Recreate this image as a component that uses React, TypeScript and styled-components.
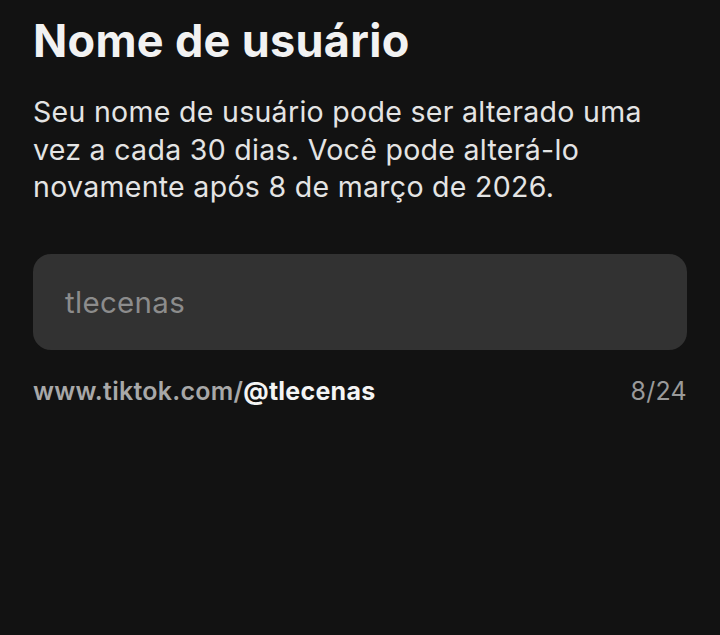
import React from 'react';
import styled, { createGlobalStyle } from 'styled-components';

const GlobalStyle = createGlobalStyle`
	html, body {
		margin: 0;
		padding: 0;
		background: #121212;
	}
	body {
		font-family: Inter, Roboto, "Liberation Sans", sans-serif;
		-webkit-font-smoothing: antialiased;
	}
`;

const Page = styled.div`
	width: 720px;
	height: 635px;
	box-sizing: border-box;
	padding: 13px 33px 0 33px;
	background: #121212;
	color: #ececec;
	display: flex;
	flex-direction: column;
`;

const Title = styled.h1`
	margin: 0;
	font-size: 45px;
	font-weight: 700;
	line-height: 56px;
	color: #f2f2f2;
	letter-spacing: 0.3px;
`;

const Description = styled.p`
	margin: 24px 0 0 0;
	font-size: 28.5px;
	line-height: 37.5px;
	font-weight: 400;
	color: #e4e4e4;
	letter-spacing: 0.3px;
`;

const InputBox = styled.div`
	margin-top: 48px;
	height: 96px;
	border-radius: 18px;
	background: #323232;
	display: flex;
	align-items: center;
	padding: 0 32px;
`;

const Placeholder = styled.span`
	font-size: 29.5px;
	color: #8c8c8c;
	letter-spacing: 0.3px;
`;

const FooterRow = styled.div`
	margin-top: 25px;
	display: flex;
	justify-content: space-between;
	align-items: center;
	font-size: 25px;
	line-height: 32px;
	letter-spacing: 0.25px;
`;

const Url = styled.span`
	color: #a8a8a8;
	font-weight: 600;
`;

const Handle = styled.span`
	color: #f4f4f4;
	font-weight: 700;
`;

const Counter = styled.span`
	color: #9a9a9a;
`;

export default function App() {
	const username = 'tlecenas';
	const maxLength = 24;
	return (
		<>
			<GlobalStyle />
			<Page>
				<Title>Nome de usuário</Title>
				<Description>
					Seu nome de usuário pode ser alterado uma vez a cada 30 dias. Você pode alterá-lo novamente após 8 de março de 2026.
				</Description>
				<InputBox>
					<Placeholder>{username}</Placeholder>
				</InputBox>
				<FooterRow>
					<Url>
						www.tiktok.com/<Handle>@{username}</Handle>
					</Url>
					<Counter>{username.length}/{maxLength}</Counter>
				</FooterRow>
			</Page>
		</>
	);
}
